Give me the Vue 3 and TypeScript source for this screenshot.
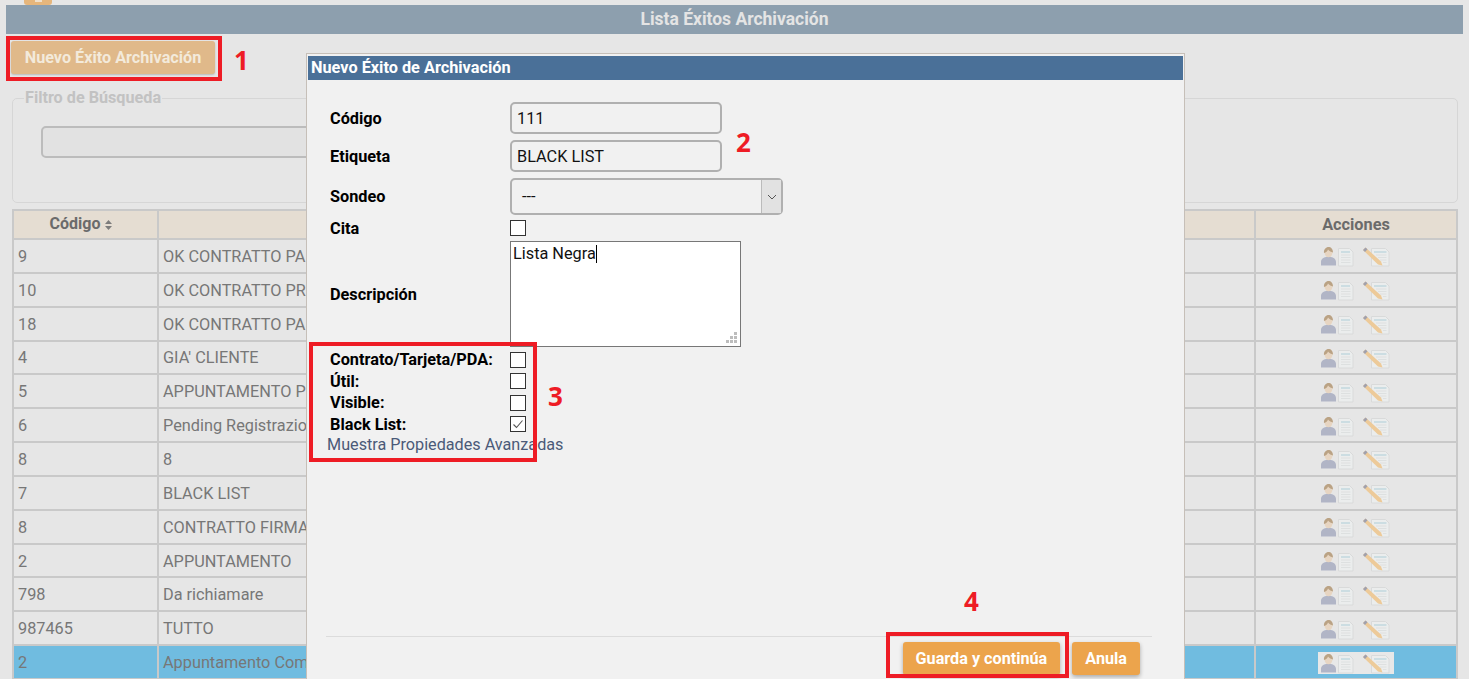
<script setup lang="ts">
interface Row { code: string; label: string; selected?: boolean }
const rows: Row[] = [
  { code: '9', label: 'OK CONTRATTO PA' },
  { code: '10', label: 'OK CONTRATTO PR' },
  { code: '18', label: 'OK CONTRATTO PA' },
  { code: '4', label: "GIA' CLIENTE" },
  { code: '5', label: 'APPUNTAMENTO P' },
  { code: '6', label: 'Pending Registrazio' },
  { code: '8', label: '8' },
  { code: '7', label: 'BLACK LIST' },
  { code: '8', label: 'CONTRATTO FIRMA' },
  { code: '2', label: 'APPUNTAMENTO' },
  { code: '798', label: 'Da richiamare' },
  { code: '987465', label: 'TUTTO' },
  { code: '2', label: 'Appuntamento Com', selected: true },
]
const flags = [
  { label: 'Contrato/Tarjeta/PDA:', checked: false },
  { label: 'Útil:', checked: false },
  { label: 'Visible:', checked: false },
  { label: 'Black List:', checked: true },
]
</script>

<template>
  <div class="page">
    <div class="logo"><i></i></div>
    <main class="panel">
      <h1 class="title">Lista Éxitos Archivación</h1>
      <div class="toolbar"><button class="new-btn">Nuevo Éxito Archivación</button></div>
      <fieldset class="filter">
        <legend>Filtro de Búsqueda</legend>
        <div class="filter-input"></div>
      </fieldset>
      <section class="table">
        <div class="row head">
          <div class="cell code-head">
            Código
            <svg class="sort" width="7" height="10" viewBox="0 0 7 10"><path d="M3.500 0 7 4H0zM3.500 10 0 6h7z" fill="#7c7c7c" /></svg>
          </div>
          <div class="cell"></div>
          <div class="cell actions-head">Acciones</div>
        </div>
        <div v-for="(r, i) in rows" :key="i" class="row body-row" :class="{ selected: r.selected }">
          <div class="cell">{{ r.code }}</div>
          <div class="cell label">{{ r.label }}</div>
          <div class="cell actions">
            <svg class="icons" width="76" height="22" viewBox="0 0 76 22">
              <rect width="76" height="22" :fill="r.selected ? '#e8e8e8' : 'none'" />
              <g class="glyphs">
                <path d="M3 20.500v-3.500c0-3 2.500-4.500 5-5l2.500-1 2.500 1c2.500.5 5 2 5 5v3.500z" fill="#a4a9bf" />
                <ellipse cx="10.500" cy="7.500" rx="4" ry="4.800" fill="#e8d2ba" />
                <path d="M6 8C5.500 4.500 8 2 10.500 2S15 4 15 7.500C13.500 7 11 6 10 4.500 9.500 6.500 8 7.500 6 8z" fill="#b0926c" />
                <path d="M20.500 3.500h11l3.500 3.500v14H20.500z" fill="#edefef" stroke="#d6d8d8" />
                <path d="M23 7h9" stroke="#b8d6de" stroke-width="1.500" />
                <path d="M23 10h9.500M23 12.500h9.500M23 15h9.500M23 17.500h9.500" stroke="#dcdfdf" />
                <path d="M53.500 3.500h14l3.500 3.500v14H53.500z" fill="#edefef" stroke="#d6d8d8" />
                <path d="M56 7h12.500" stroke="#b8d6de" stroke-width="1.500" />
                <path d="M58 10h10.500M60 12.500h8.500M62 15h6.500M65 17.500h3.500" stroke="#dcdfdf" />
                <path d="M45 5 47.500 2.500 63 16.500 64.500 20.500 60 19.500z" fill="#efc486" />
                <path d="M45 5 47.500 2.500 49.500 4.300 47 7z" fill="#9090a0" />
              </g>
            </svg>
          </div>
        </div>
      </section>
    </main>

    <div class="modal">
      <div class="modal-title">Nuevo Éxito de Archivación</div>
      <form class="form" @submit.prevent>
        <div class="field f-code">
          <label>Código</label>
          <input class="text" value="111" />
        </div>
        <div class="field f-tag">
          <label>Etiqueta</label>
          <input class="text" value="BLACK LIST" />
        </div>
        <div class="field f-select">
          <label>Sondeo</label>
          <div class="select">
            <span>---</span>
            <span class="arrow">
              <svg width="10" height="6" viewBox="0 0 10 6"><path d="M1 1l4 4 4-4" fill="none" stroke="#555" /></svg>
            </span>
          </div>
        </div>
        <div class="field f-cita">
          <label>Cita</label>
          <span class="check"></span>
        </div>
        <div class="field f-desc">
          <label>Descripción</label>
          <div class="area">
            Lista Negra<i class="caret"></i>
            <svg class="grip" width="11" height="11" viewBox="0 0 11 11"><path d="M8 0h3v3H8zM4 4h3v3H4zM8 4h3v3H8zM0 8h3v3H0zM4 8h3v3H4zM8 8h3v3H8z" fill="#bdbdbd" /></svg>
          </div>
        </div>
        <div class="flags">
          <div v-for="f in flags" :key="f.label" class="flag">
            <label>{{ f.label }}</label>
            <span class="check">
              <svg v-if="f.checked" width="14" height="14" viewBox="0 0 14 14"><path d="M2.500 7.500 5.500 10.500 11.500 3.500" fill="none" stroke="#555" stroke-width="1.100" /></svg>
            </span>
          </div>
        </div>
        <div class="advanced">Muestra Propiedades Avanzadas</div>
      </form>
      <footer class="modal-foot">
        <button class="btn">Guarda y continúa</button>
        <button class="btn">Anula</button>
      </footer>
    </div>

    <div class="mark box1"></div>
    <div class="mark box3"></div>
    <div class="mark box4"></div>
    <span class="num n1">1</span>
    <span class="num n2">2</span>
    <span class="num n3">3</span>
    <span class="num n4">4</span>
  </div>
</template>

<style>
html, body { margin: 0; padding: 0; overflow: hidden; }
</style>

<style scoped>
* { box-sizing: border-box; }
.page {
  position: relative;
  width: 1469px;
  height: 679px;
  overflow: hidden;
  background: #e6e6e6;
  font-family: Roboto, "Liberation Sans", sans-serif;
  font-size: 16.300px;
  color: #777;
}
.logo {
  position: absolute;
  left: 24px;
  top: -4px;
  width: 28px;
  height: 9px;
  background: #e6b67c;
  border-radius: 3px;
}
.logo i {
  position: absolute;
  left: 11px;
  top: 3px;
  width: 7px;
  height: 3px;
  background: #efe0cc;
}
.panel { padding: 5px 6px 0; }
.title {
  margin: 0;
  height: 29px;
  background: #8d9fae;
  color: #e4e4e4;
  font-size: 17.500px;
  font-weight: 700;
  line-height: 29px;
  text-align: center;
}
.toolbar { padding: 7px 0 0 5px; height: 55px; }
.new-btn {
  display: block;
  width: 204px;
  height: 33px;
  border: 0;
  border-radius: 3px;
  background: #e0b98a;
  color: #f3eadb;
  font: 700 16.200px Roboto, sans-serif;
  box-shadow: 0 1px 2px rgba(0, 0, 0, .2);
  padding: 0;
}
.filter {
  margin: 0 5px 0 6px;
  padding: 0;
  height: 114px;
  border: 1px solid #d6d6d6;
  border-radius: 5px;
  min-width: 0;
}
.filter legend {
  margin-left: 11px;
  padding: 0 1px;
  color: #c2c2c2;
  font-size: 16.200px;
  font-weight: 700;
  line-height: 18px;
}
.filter-input {
  margin: 19px 0 0 28px;
  width: 500px;
  height: 32px;
  border: 2px solid #bcbcbc;
  border-radius: 5px;
  background: #e2e2e2;
}
.table {
  margin: 6px 5px 0 6px;
  border-top: 2px solid #c9c9c9;
  border-left: 2px solid #c9c9c9;
  border-right: 2px solid #c9c9c9;
}
.row {
  display: grid;
  grid-template-columns: 145px 1097px 1fr;
  height: 33.850px;
  border-bottom: 2px solid #c9c9c9;
}
.cell {
  display: flex;
  align-items: center;
  padding-left: 4px;
  border-right: 2px solid #c9c9c9;
  white-space: nowrap;
  overflow: hidden;
}
.cell:last-child { border-right: 0; }
.body-row .cell { padding-top: 1px; }
.head { height: 29px; background: #e5ddd2; font-weight: 700; color: #6b6b6b; }
.code-head { justify-content: center; gap: 5px; padding: 0 9px 2px 0; font-size: 16px; }
.sort { margin-top: 2px; }
.cell.actions-head, .cell.actions { justify-content: center; padding-left: 0; }
.icons { display: block; }
.glyphs { filter: blur(.35px); opacity: .8; }
.selected { background: #70bce0; }

.modal {
  position: absolute;
  left: 306px;
  top: 53px;
  width: 879px;
  height: 640px;
  padding: 2px 1px;
  background: #f1f1f1;
  border: 1px solid #c6bfb8;
  color: #000;
}
.modal-title {
  height: 24px;
  padding-left: 3px;
  background: #4a7098;
  color: #fff;
  font-size: 16.300px;
  font-weight: 700;
  line-height: 24px;
}
.form { padding: 22px 0 0 22px; height: 556px; }
.field, .flag { display: flex; align-items: center; }
.field label { width: 180px; font-weight: 700; color: #000; }
.f-code { height: 32px; margin-bottom: 6px; }
.f-tag { height: 32px; margin-bottom: 6px; }
.f-select { height: 37px; margin-bottom: 5px; }
.f-cita { height: 16px; margin-bottom: 5px; }
.f-desc { height: 106px; margin-bottom: 2.300px; }
.text {
  width: 212px;
  height: 32px;
  padding: 0 5px;
  border: 2px solid #b0b0b0;
  border-radius: 5px;
  background: #f1f1f1;
  color: #111;
  font: 16.300px Roboto, sans-serif;
}
.select {
  display: flex;
  justify-content: space-between;
  width: 273px;
  height: 37px;
  border: 2px solid #b0b0b0;
  border-radius: 5px;
  color: #111;
  padding-left: 10px;
  align-items: center;
}
.arrow {
  display: flex;
  align-items: center;
  justify-content: center;
  width: 20px;
  height: 33px;
  background: #e2e2e2;
  border-left: 1px solid #bbb;
}
.check {
  display: flex;
  align-items: center;
  justify-content: center;
  width: 16px;
  height: 16px;
  border: 1px solid #333;
  background: #fff;
}
.area {
  position: relative;
  width: 231px;
  height: 106px;
  padding: 2px;
  border: 1px solid #777;
  background: #fff;
  color: #111;
  line-height: 19px;
}
.caret {
  display: inline-block;
  width: 1px;
  height: 18px;
  background: #000;
  vertical-align: -4px;
}
.grip { position: absolute; right: 3px; bottom: 3px; }
.flag { height: 21.400px; }
.flag label { width: 180px; font-weight: 700; color: #000; }
.advanced { margin: 0 0 0 -3px; color: #4b5a78; font-size: 16.200px; line-height: 19px; }
.modal-foot {
  display: flex;
  gap: 12px;
  margin: 0 31px 0 18px;
  padding: 5px 12px 0 0;
  justify-content: flex-end;
  border-top: 1px solid #dcdcdc;
}
.btn {
  height: 33px;
  padding: 0 13px;
  border: 0;
  border-radius: 3px;
  background: #eca44c;
  color: #fff;
  font: 700 16.200px Roboto, sans-serif;
  box-shadow: 0 2px 4px rgba(0, 0, 0, .3);
}
.mark { position: absolute; border: 4px solid #ee1c25; }
.box1 { left: 6px; top: 36px; width: 216px; height: 45px; }
.box3 { left: 309px; top: 342px; width: 228px; height: 120px; }
.box4 { left: 886px; top: 632px; width: 183px; height: 46px; }
.num {
  position: absolute;
  color: #ee1c25;
  font: 700 26px "Open Sans", sans-serif;
  line-height: 30px;
}
.n1 { left: 234px; top: 45px; }
.n2 { left: 736px; top: 127px; }
.n3 { left: 548px; top: 381px; }
.n4 { left: 964px; top: 586px; }
</style>
